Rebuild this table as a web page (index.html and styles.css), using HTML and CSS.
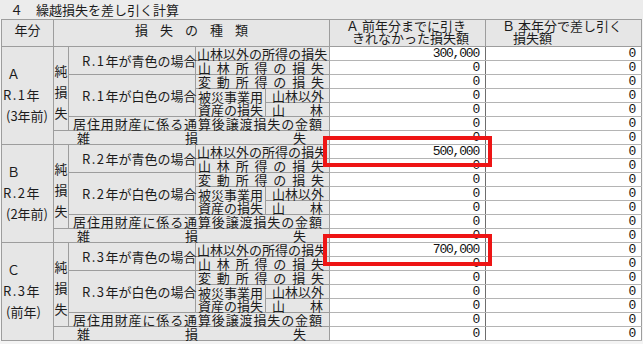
FILE: index.html
```html
<!DOCTYPE html>
<html lang="ja">
<head>
<meta charset="utf-8">
<link rel="stylesheet" href="styles.css">
</head>
<body>
<div class="page">
  <div class="title">４　繰越損失を差し引く計算</div>
  <div class="sheet">
    <table class="grid">
      <colgroup>
        <col class="c-year"><col class="c-jun"><col class="c-kind"><col class="c-sub1"><col class="c-sub2"><col class="c-a"><col class="c-b">
      </colgroup>
      <thead>
        <tr class="head">
          <th class="lbl h-year">年分</th>
          <th class="lbl h-kind" colspan="4">損失の種類</th>
          <th class="lbl h-a"><span class="l1">Ａ 前年分までに引き</span><span class="l2">きれなかった損失額</span></th>
          <th class="lbl h-b"><span class="l1">Ｂ 本年分で差し引く</span><span class="l2">損失額</span></th>
        </tr>
      </thead>
      <tbody>
        <!-- A -->
        <tr>
          <td class="lbl year" rowspan="7"><div class="y1">Ａ</div><div class="y2"><span class="r">R.1</span>年</div><div class="y3">(3年前)</div></td>
          <td class="lbl jun" rowspan="6"><div>純</div><div>損</div><div>失</div></td>
          <td class="lbl kind" rowspan="2"><span class="r">R.1</span>年が青色の場合</td>
          <td class="lbl" colspan="2"><div class="jst p-full"><span>山</span><span>林</span><span>以</span><span>外</span><span>の</span><span>所</span><span>得</span><span>の</span><span>損</span><span>失</span></div></td>
          <td class="val a">300,000</td><td class="val b">0</td>
        </tr>
        <tr>
          <td class="lbl" colspan="2"><div class="jst p-sp"><span>山</span><span>林</span><span>所</span><span>得</span><span>の</span><span>損</span><span>失</span></div></td>
          <td class="val a">0</td><td class="val b">0</td>
        </tr>
        <tr>
          <td class="lbl kind" rowspan="3"><span class="r">R.1</span>年が白色の場合</td>
          <td class="lbl" colspan="2"><div class="jst p-sp"><span>変</span><span>動</span><span>所</span><span>得</span><span>の</span><span>損</span><span>失</span></div></td>
          <td class="val a">0</td><td class="val b">0</td>
        </tr>
        <tr>
          <td class="lbl hisai" rowspan="2"><div>被災事業用</div><div>資産の損失</div></td>
          <td class="lbl"><div class="jst p-sub">山林以外</div></td>
          <td class="val a">0</td><td class="val b">0</td>
        </tr>
        <tr>
          <td class="lbl"><div class="jst p-sub"><span>山</span><span>林</span></div></td>
          <td class="val a">0</td><td class="val b">0</td>
        </tr>
        <tr>
          <td class="lbl" colspan="3"><div class="jst p-kyo"><span>居</span><span>住</span><span>用</span><span>財</span><span>産</span><span>に</span><span>係</span><span>る</span><span>通</span><span>算</span><span>後</span><span>譲</span><span>渡</span><span>損</span><span>失</span><span>の</span><span>金</span><span>額</span></div></td>
          <td class="val a">0</td><td class="val b">0</td>
        </tr>
        <tr>
          <td class="lbl" colspan="4"><div class="jst p-zatsu"><span>雑</span><span>損</span><span>失</span></div></td>
          <td class="val a">0</td><td class="val b">0</td>
        </tr>
        <!-- B -->
        <tr>
          <td class="lbl year" rowspan="7"><div class="y1">Ｂ</div><div class="y2"><span class="r">R.2</span>年</div><div class="y3">(2年前)</div></td>
          <td class="lbl jun" rowspan="6"><div>純</div><div>損</div><div>失</div></td>
          <td class="lbl kind" rowspan="2"><span class="r">R.2</span>年が青色の場合</td>
          <td class="lbl" colspan="2"><div class="jst p-full"><span>山</span><span>林</span><span>以</span><span>外</span><span>の</span><span>所</span><span>得</span><span>の</span><span>損</span><span>失</span></div></td>
          <td class="val a">500,000</td><td class="val b">0</td>
        </tr>
        <tr>
          <td class="lbl" colspan="2"><div class="jst p-sp"><span>山</span><span>林</span><span>所</span><span>得</span><span>の</span><span>損</span><span>失</span></div></td>
          <td class="val a">0</td><td class="val b">0</td>
        </tr>
        <tr>
          <td class="lbl kind" rowspan="3"><span class="r">R.2</span>年が白色の場合</td>
          <td class="lbl" colspan="2"><div class="jst p-sp"><span>変</span><span>動</span><span>所</span><span>得</span><span>の</span><span>損</span><span>失</span></div></td>
          <td class="val a">0</td><td class="val b">0</td>
        </tr>
        <tr>
          <td class="lbl hisai" rowspan="2"><div>被災事業用</div><div>資産の損失</div></td>
          <td class="lbl"><div class="jst p-sub">山林以外</div></td>
          <td class="val a">0</td><td class="val b">0</td>
        </tr>
        <tr>
          <td class="lbl"><div class="jst p-sub"><span>山</span><span>林</span></div></td>
          <td class="val a">0</td><td class="val b">0</td>
        </tr>
        <tr>
          <td class="lbl" colspan="3"><div class="jst p-kyo"><span>居</span><span>住</span><span>用</span><span>財</span><span>産</span><span>に</span><span>係</span><span>る</span><span>通</span><span>算</span><span>後</span><span>譲</span><span>渡</span><span>損</span><span>失</span><span>の</span><span>金</span><span>額</span></div></td>
          <td class="val a">0</td><td class="val b">0</td>
        </tr>
        <tr>
          <td class="lbl" colspan="4"><div class="jst p-zatsu"><span>雑</span><span>損</span><span>失</span></div></td>
          <td class="val a">0</td><td class="val b">0</td>
        </tr>
        <!-- C -->
        <tr>
          <td class="lbl year" rowspan="7"><div class="y1">Ｃ</div><div class="y2"><span class="r">R.3</span>年</div><div class="y3">(前年)</div></td>
          <td class="lbl jun" rowspan="6"><div>純</div><div>損</div><div>失</div></td>
          <td class="lbl kind" rowspan="2"><span class="r">R.3</span>年が青色の場合</td>
          <td class="lbl" colspan="2"><div class="jst p-full"><span>山</span><span>林</span><span>以</span><span>外</span><span>の</span><span>所</span><span>得</span><span>の</span><span>損</span><span>失</span></div></td>
          <td class="val a">700,000</td><td class="val b">0</td>
        </tr>
        <tr>
          <td class="lbl" colspan="2"><div class="jst p-sp"><span>山</span><span>林</span><span>所</span><span>得</span><span>の</span><span>損</span><span>失</span></div></td>
          <td class="val a">0</td><td class="val b">0</td>
        </tr>
        <tr>
          <td class="lbl kind" rowspan="3"><span class="r">R.3</span>年が白色の場合</td>
          <td class="lbl" colspan="2"><div class="jst p-sp"><span>変</span><span>動</span><span>所</span><span>得</span><span>の</span><span>損</span><span>失</span></div></td>
          <td class="val a">0</td><td class="val b">0</td>
        </tr>
        <tr>
          <td class="lbl hisai" rowspan="2"><div>被災事業用</div><div>資産の損失</div></td>
          <td class="lbl"><div class="jst p-sub">山林以外</div></td>
          <td class="val a">0</td><td class="val b">0</td>
        </tr>
        <tr>
          <td class="lbl"><div class="jst p-sub"><span>山</span><span>林</span></div></td>
          <td class="val a">0</td><td class="val b">0</td>
        </tr>
        <tr>
          <td class="lbl" colspan="3"><div class="jst p-kyo"><span>居</span><span>住</span><span>用</span><span>財</span><span>産</span><span>に</span><span>係</span><span>る</span><span>通</span><span>算</span><span>後</span><span>譲</span><span>渡</span><span>損</span><span>失</span><span>の</span><span>金</span><span>額</span></div></td>
          <td class="val a">0</td><td class="val b">0</td>
        </tr>
        <tr>
          <td class="lbl" colspan="4"><div class="jst p-zatsu"><span>雑</span><span>損</span><span>失</span></div></td>
          <td class="val a">0</td><td class="val b">0</td>
        </tr>
      </tbody>
    </table>
    <div class="mark mark-1"></div>
    <div class="mark mark-2"></div>
  </div>
</div>
</body>
</html>
```
FILE: styles.css
```css
* { box-sizing: border-box; }
html, body { margin: 0; padding: 0; }
body {
  width: 643px;
  height: 344px;
  overflow: hidden;
  background: #f4f4f4;
  font-family: "Noto Sans CJK JP", "Noto Sans", sans-serif;
  font-size: 13px;
  color: #1c1c1c;
}
.page { width: 643px; }
.title {
  height: 19px;
  background: #ececec;
  padding: 3px 0 0 10px;
  line-height: 14px;
  white-space: nowrap;
}
.sheet {
  position: relative;
  padding-left: 1px;
}
.grid {
  border-collapse: collapse;
  table-layout: fixed;
  width: 640px;
}
.c-year { width: 52px; }
.c-jun { width: 15px; }
.c-kind { width: 127px; }
.c-sub1 { width: 70px; }
.c-sub2 { width: 64px; }
.c-a { width: 156px; }
.c-b { width: 156px; }

.grid th, .grid td {
  border: 1px solid #9d9d9d;
  padding: 0;
  line-height: 13px;
  font-weight: normal;
  white-space: nowrap;
}
.grid tbody tr { height: 14px; }
.grid .head { height: 27px; }
.lbl { background: #e6e6e6; }

.head th { vertical-align: top; text-align: left; }
.h-year { text-align: center !important; padding-top: 3px !important; }
.h-kind { text-align: center !important; padding: 3px 0 0 12px !important; letter-spacing: 12px; }
.h-a, .h-b { padding-top: 0 !important; line-height: 12px !important; }
.h-a { padding-left: 16px !important; }
.h-b { padding-left: 16px !important; }
.head .l1, .head .l2 { display: block; }
.h-a .l2 { padding-left: 6px; }
.h-b .l2 { padding-left: 11px; }

.year { vertical-align: top; padding-top: 16px !important; line-height: 21px !important; }
.y1 { padding-left: 5px; }
.y2 { padding-left: 1px; }
.y3 { padding-left: 4px; }
.r { letter-spacing: 1.5px; }

.jun { text-align: center; vertical-align: middle; line-height: 21px !important; padding-top: 6px !important; }
.kind { text-align: left; padding-left: 13px !important; vertical-align: middle; }
.hisai { line-height: 13px !important; padding-left: 2px !important; vertical-align: middle; }

.jst { display: flex; justify-content: space-between; }
.p-full { padding: 0 3px 0 1px; }
.p-sp { padding: 0 5px 0 2px; }
.p-sub { padding: 0 6px 0 6px; }
.p-kyo { padding: 0 7px 0 4px; }
.p-zatsu { padding: 0 23px 0 23px; }

.val {
  background: #fff;
  text-align: right;
  padding-right: 6px !important;
  font-family: "Liberation Mono", monospace;
  font-size: 13px;
  letter-spacing: -1.2px;
  color: #111;
}
.grid td.a { border-right-color: #6e6e6e; }
.grid td.val { border-top-color: #b4b4b4; border-bottom-color: #b4b4b4; }

.mark {
  position: absolute;
  border: 4px solid #ee1515;
  pointer-events: none;
}
.mark-1 { left: 323px; top: 117px; width: 169px; height: 31px; }
.mark-2 { left: 323px; top: 215px; width: 169px; height: 32px; }
```
